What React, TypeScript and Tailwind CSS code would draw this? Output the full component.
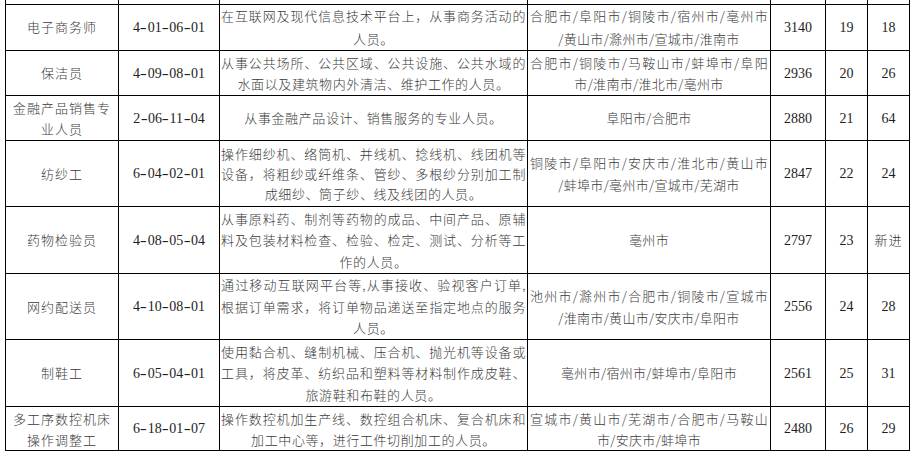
import React from "react";

type Row = {
  name: string[];
  code: string;
  desc: string[];
  cities: string[];
  n1: string;
  n2: string;
  n3: string;
  lh?: number;
  descLh?: number;
};

const rows: Row[] = [
  {
    name: ["电子商务师"],
    code: "4-01-06-01",
    desc: ["在互联网及现代信息技术平台上，从事商务活动的", "人员。"],
    cities: ["合肥市/阜阳市/铜陵市/宿州市/亳州市", "/黄山市/滁州市/宣城市/淮南市"],
    n1: "3140",
    n2: "19",
    n3: "18",
    lh: 22.5,
  },
  {
    name: ["保洁员"],
    code: "4-09-08-01",
    desc: ["从事公共场所、公共区域、公共设施、公共水域的", "水面以及建筑物内外清洁、维护工作的人员。"],
    cities: ["合肥市/铜陵市/马鞍山市/蚌埠市/阜阳", "市/淮南市/淮北市/亳州市"],
    n1: "2936",
    n2: "20",
    n3: "26",
  },
  {
    name: ["金融产品销售专", "业人员"],
    code: "2-06-11-04",
    desc: ["从事金融产品设计、销售服务的专业人员。"],
    cities: ["阜阳市/合肥市"],
    n1: "2880",
    n2: "21",
    n3: "64",
  },
  {
    name: ["纺纱工"],
    code: "6-04-02-01",
    desc: [
      "操作细纱机、络筒机、并线机、捻线机、线团机等",
      "设备，将粗纱或纤维条、管纱、多根纱分别加工制",
      "成细纱、筒子纱、线及线团的人员。",
    ],
    cities: ["铜陵市/阜阳市/安庆市/淮北市/黄山市", "/蚌埠市/亳州市/宣城市/芜湖市"],
    n1: "2847",
    n2: "22",
    n3: "24",
    descLh: 20,
  },
  {
    name: ["药物检验员"],
    code: "4-08-05-04",
    desc: [
      "从事原料药、制剂等药物的成品、中间产品、原辅",
      "料及包装材料检查、检验、检定、测试、分析等工",
      "作的人员。",
    ],
    cities: ["亳州市"],
    n1: "2797",
    n2: "23",
    n3: "新进",
  },
  {
    name: ["网约配送员"],
    code: "4-10-08-01",
    desc: [
      "通过移动互联网平台等,从事接收、验视客户订单,",
      "根据订单需求，将订单物品递送至指定地点的服务",
      "人员。",
    ],
    cities: ["池州市/滁州市/合肥市/铜陵市/宣城市", "/淮南市/黄山市/安庆市/阜阳市"],
    n1: "2556",
    n2: "24",
    n3: "28",
  },
  {
    name: ["制鞋工"],
    code: "6-05-04-01",
    desc: [
      "使用黏合机、缝制机械、压合机、抛光机等设备或",
      "工具，将皮革、纺织品和塑料等材料制作成皮鞋、",
      "旅游鞋和布鞋的人员。",
    ],
    cities: ["亳州市/宿州市/蚌埠市/阜阳市"],
    n1: "2561",
    n2: "25",
    n3: "31",
  },
  {
    name: ["多工序数控机床", "操作调整工"],
    code: "6-18-01-07",
    desc: ["操作数控机加生产线、数控组合机床、复合机床和", "加工中心等，进行工件切削加工的人员。"],
    cities: ["宣城市/黄山市/芜湖市/合肥市/马鞍山", "市/安庆市/蚌埠市"],
    n1: "2480",
    n2: "26",
    n3: "29",
    lh: 21,
  },
];

const cjk = "font-['Noto_Sans_CJK_SC',sans-serif] font-light text-[13px] text-[#3a3a3a]";
const num = "font-['Liberation_Serif',serif] text-[14px] text-[#1e1e1e]";

function Cell({ children, className = "" }: { children?: React.ReactNode; className?: string }) {
  return <div className={`bg-white flex flex-col justify-center min-w-0 overflow-hidden ${className}`}>{children}</div>;
}

function JustLines({ lines, lh, extra }: { lines: string[]; lh: number; extra: string }) {
  return (
    <>
      {lines.map((l, i) => {
        const last = i === lines.length - 1;
        return (
          <div
            key={i}
            className={`${extra} ${last ? "text-center" : "text-justify [text-align-last:justify]"}`}
            style={{ height: lh, lineHeight: `${lh}px` }}
          >
            {l}
          </div>
        );
      })}
    </>
  );
}

function Code({ code }: { code: string }) {
  const parts = code.split("-");
  return (
    <div className={`${num} text-center`}>
      {parts.map((p, i) => (
        <React.Fragment key={i}>
          {i > 0 && <span className="inline-block mx-[1.5px] scale-x-150">-</span>}
          {p}
        </React.Fragment>
      ))}
    </div>
  );
}

export default function App() {
  return (
    <div className="w-[914px] h-[451px] bg-white overflow-hidden">
      <div className="ml-[5px] w-[905px] bg-black px-px pb-px grid gap-px grid-cols-[112px_100px_307px_242px_54px_41px_41px] grid-rows-[4px_45px_44px_44px_65px_66px_65px_66px_43px]">
        {Array.from({ length: 7 }).map((_, i) => (
          <div key={`top-${i}`} className="bg-white" />
        ))}
        {rows.map((r, ri) => {
          const lh = r.lh ?? 21.5;
          return (
            <React.Fragment key={ri}>
              <Cell className="px-[4px]">
                {r.name.map((n, i) => (
                  <div
                    key={i}
                    className={`${cjk} tracking-[1px] text-center whitespace-nowrap`}
                    style={{ height: lh, lineHeight: `${lh}px` }}
                  >
                    {n}
                  </div>
                ))}
              </Cell>
              <Cell>
                <Code code={r.code} />
              </Cell>
              <Cell className="px-[1px]">
                <JustLines lines={r.desc} lh={r.descLh ?? lh} extra={`${cjk} tracking-[0.6px]`} />
              </Cell>
              <Cell className="px-[2px]">
                <JustLines lines={r.cities} lh={lh} extra={`${cjk} tracking-[0.3px]`} />
              </Cell>
              <Cell>
                <div className={`${num} text-center`}>{r.n1}</div>
              </Cell>
              <Cell>
                <div className={`${num} text-center`}>{r.n2}</div>
              </Cell>
              <Cell>
                {/^\d+$/.test(r.n3) ? (
                  <div className={`${num} text-center`}>{r.n3}</div>
                ) : (
                  <div className={`${cjk} text-[#333] tracking-[1px] text-center`}>{r.n3}</div>
                )}
              </Cell>
            </React.Fragment>
          );
        })}
      </div>
    </div>
  );
}
